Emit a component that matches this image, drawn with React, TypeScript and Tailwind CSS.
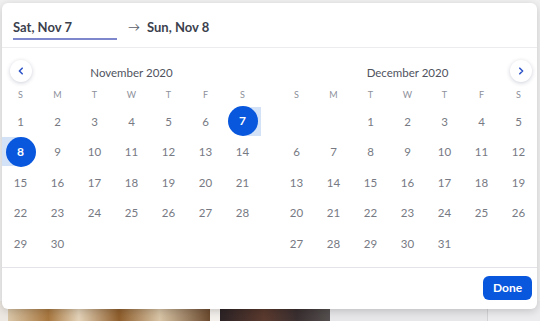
import React from 'react';

type Cell = number | null;

const WEEKDAYS = ['S', 'M', 'T', 'W', 'T', 'F', 'S'];

// build weeks for a month given the weekday of the 1st
function buildWeeks(firstDay: number, days: number): Cell[][] {
  const cells: Cell[] = [];
  for (let i = 0; i < firstDay; i++) cells.push(null);
  for (let d = 1; d <= days; d++) cells.push(d);
  while (cells.length % 7 !== 0) cells.push(null);
  const weeks: Cell[][] = [];
  for (let i = 0; i < cells.length; i += 7) weeks.push(cells.slice(i, i + 7));
  return weeks;
}

const ChevronLeft = () => (
  <svg width="10" height="10" viewBox="0 0 10 10" fill="none">
    <path d="M6.2 2.2 3.4 5l2.8 2.8" stroke="#2f55c8" strokeWidth="1.6" strokeLinecap="round" strokeLinejoin="round" />
  </svg>
);

const ChevronRight = () => (
  <svg width="10" height="10" viewBox="0 0 10 10" fill="none">
    <path d="M3.8 2.2 6.6 5 3.8 7.8" stroke="#2f55c8" strokeWidth="1.6" strokeLinecap="round" strokeLinejoin="round" />
  </svg>
);

const NavButton: React.FC<{ side: 'left' | 'right' }> = ({ side }) => (
  <button
    className={`absolute top-[0px] ${side === 'left' ? 'left-[8px]' : 'right-[5px]'} w-[22px] h-[22px] rounded-full bg-white flex items-center justify-center shadow-[0_1px_4px_rgba(30,40,80,0.22)]`}
  >
    {side === 'left' ? <ChevronLeft /> : <ChevronRight />}
  </button>
);

const DayCell: React.FC<{ day: Cell; start?: boolean; end?: boolean }> = ({ day, start, end }) => {
  if (day === null) return <div className="h-[30.5px]" />;
  const selected = start || end;
  return (
    <div className="relative h-[30.5px] flex items-center justify-center">
      {start && <div className="absolute left-1/2 right-0 top-[0.5px] bottom-[1px] bg-[#d4e2f8]" />}
      {end && <div className="absolute left-0 right-1/2 top-[0.5px] bottom-[1px] bg-[#d4e2f8]" />}
      {selected ? (
        <span className="relative w-[30px] h-[30px] rounded-full bg-[#0857dd] text-white font-bold text-[12px] flex items-center justify-center">
          {day}
        </span>
      ) : (
        <span className="text-[11.5px] text-[#777a83]">{day}</span>
      )}
    </div>
  );
};

const Month: React.FC<{
  title: string;
  firstDay: number;
  days: number;
  nav: 'left' | 'right';
  startDay?: number;
  endDay?: number;
}> = ({ title, firstDay, days, nav, startDay, endDay }) => {
  const weeks = buildWeeks(firstDay, days);
  return (
    <div className="w-[259px] flex flex-col">
      <div className="relative h-[24px] flex items-center justify-center">
        <NavButton side={nav} />
        <span className="text-[11.5px] text-[#50535e] pt-[1px]">{title}</span>
      </div>
      <div className="grid grid-cols-7 h-[22px] items-center">
        {WEEKDAYS.map((w, i) => (
          <span key={i} className="text-center text-[9px] text-[#8d909a]">
            {w}
          </span>
        ))}
      </div>
      {weeks.map((week, wi) => (
        <div key={wi} className="grid grid-cols-7">
          {week.map((d, di) => (
            <DayCell key={di} day={d} start={d !== null && d === startDay} end={d !== null && d === endDay} />
          ))}
        </div>
      ))}
    </div>
  );
};

export default function App() {
  return (
    <div
      className="w-[540px] h-[321px] overflow-hidden bg-[#f1f1f2] flex flex-col"
      style={{ fontFamily: 'Lato, "Noto Sans", sans-serif' }}
    >
      <div className="relative z-10 mt-[3px] ml-[2px] w-[535px] h-[306px] bg-white rounded-[6px] shadow-[0_2px_8px_rgba(0,0,0,0.18)] flex flex-col">
        {/* header with the two dates */}
        <div className="flex items-end pl-[11px] pt-[14px] pb-[7px] border-b border-[#ececef]">
          <div className="w-[104px] border-b-2 border-[#7f87cc] pb-[1px]">
            <span className="block h-5 leading-5 text-[13px] font-bold text-[#3c3f4d]">Sat, Nov 7</span>
          </div>
          <div className="ml-[11px] h-5 mb-[3px] flex items-center text-[#5a5d69] text-[12px]">→</div>
          <div className="ml-[7px] h-5 mb-[3px] leading-5 text-[13px] font-bold text-[#3c3f4d]">Sun, Nov 8</div>
        </div>

        {/* months */}
        <div className="flex gap-[17px] pt-[12px] pb-[8px] border-b border-[#e4e4e8]">
          <Month title="November 2020" firstDay={0} days={30} nav="left" startDay={7} endDay={8} />
          <Month title="December 2020" firstDay={2} days={31} nav="right" />
        </div>

        {/* footer */}
        <div className="flex-1 flex items-center justify-end pr-[5px]">
          <button className="w-[49px] h-[24px] rounded-[6px] bg-[#0857dd] text-white text-[12px] font-bold">
            Done
          </button>
        </div>
      </div>

      {/* what peeks out under the popup */}
      <div className="flex h-[20px] -mt-[8px]">
        <div className="w-[8px] bg-[#ece7e0]" />
        <div className="w-[202px] bg-[linear-gradient(90deg,#d9c6a8,#a8773f_20%,#e3d2b8_35%,#8f5e2c_55%,#d8c4a6_75%,#6b4a2e)]" />
        <div className="w-[10px] bg-[#f3f0ec]" />
        <div className="w-[110px] bg-[linear-gradient(90deg,#2c2326,#5b3a2e_40%,#3a2f30_70%,#55504f)]" />
        <div className="w-[157px] bg-[#e7e7ea]" />
        <div className="w-[1px] bg-[#d3d3d6]" />
        <div className="flex-1 bg-[#ececee]" />
      </div>
    </div>
  );
}
